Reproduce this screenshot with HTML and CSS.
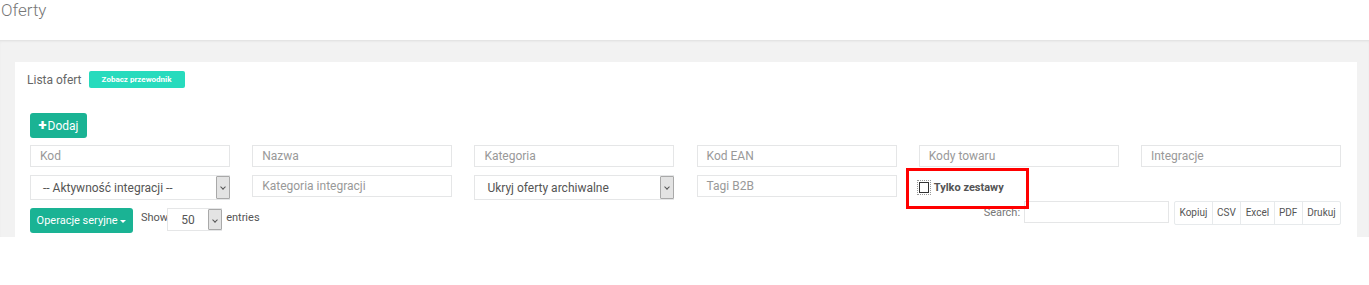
FILE: index.html
```html
<!DOCTYPE html>
<html lang="pl">
<head>
  <meta charset="utf-8">
  <link rel="stylesheet" href="styles.css">
</head>
<body>
  <div class="page-heading">Oferty</div>

  <div class="wrapper">
    <div class="ibox">
      <div class="ibox-title">
        <span class="ibox-name">Lista ofert</span>
        <span class="badge-guide">Zobacz przewodnik</span>
      </div>

      <div class="ibox-content">
        <button class="btn btn-primary btn-add"><span class="plus">+</span>Dodaj</button>

        <!-- Filtry -->
        <div class="filters">
          <div class="field">Kod</div>
          <div class="field">Nazwa</div>
          <div class="field">Kategoria</div>
          <div class="field">Kod EAN</div>
          <div class="field">Kody towaru</div>
          <div class="field">Integracje</div>

          <div class="select"><span>-- Aktywność integracji --</span><span class="arrow"></span></div>
          <div class="field">Kategoria integracji</div>
          <div class="select"><span>Ukryj oferty archiwalne</span><span class="arrow"></span></div>
          <div class="field">Tagi B2B</div>
          <div class="check-cell">
            <label class="check"><span class="box"></span>Tylko zestawy</label>
            <div class="highlight"></div>
          </div>
          <div></div>
        </div>

        <div class="table-tools">
          <div class="tools-left">
            <button class="btn btn-primary btn-ops">Operacje seryjne <span class="caret"></span></button>
            <span class="show-label">Show</span>
            <div class="select select-small"><span>50</span><span class="arrow"></span></div>
            <span class="show-label">entries</span>
          </div>
          <div class="tools-right">
            <span class="search-label">Search:</span>
            <div class="search-input"></div>
            <div class="btn-group">
              <span>Kopiuj</span>
              <span>CSV</span>
              <span>Excel</span>
              <span>PDF</span>
              <span>Drukuj</span>
            </div>
          </div>
        </div>
      </div>
    </div>
  </div>
</body>
</html>
```

FILE: styles.css
```css
body {
  margin: 0;
  font-family: Roboto, "Liberation Sans", sans-serif;
  color: #555;
  background: #fff;
}
.page-heading {
  height: 40px;
  padding-left: 1px;
  font-size: 17px;
  font-weight: 300;
  color: #777;
  line-height: 20px;
  box-sizing: border-box;
}
.wrapper {
  height: 197px;
  overflow: hidden;
  background: #f2f2f2;
  border-top: 1px solid #e4e4e4;
  box-shadow: inset 0 1px 2px rgba(0, 0, 0, 0.04);
  padding: 21px 12px 0 15px;
  box-sizing: border-box;
}
.ibox {
  background: #fff;
  height: 300px;
}
.ibox-title {
  display: flex;
  align-items: center;
  height: 34px;
  padding-left: 12px;
  box-sizing: border-box;
  padding-top: 1px;
}
.ibox-name {
  font-size: 12px;
  color: #666;
}
.badge-guide {
  margin-left: 7px;
  background: #27dbbd;
  color: #fff;
  font-size: 8px;
  font-weight: 700;
  width: 96px;
  height: 17px;
  line-height: 17px;
  text-align: center;
  border-radius: 2px;
}
.ibox-content {
  padding: 17px 16px 0 15px;
}
.btn {
  border: none;
  border-radius: 3px;
  font-family: inherit;
  cursor: pointer;
}
.btn-primary {
  background: #1ab394;
  color: #fff;
}
.btn-add {
  width: 57px;
  height: 25px;
  font-size: 12px;
  padding: 0;
  display: flex;
  align-items: center;
  justify-content: center;
}
.plus {
  font-size: 15px;
  font-weight: 900;
  margin-right: 1px;
  line-height: 1;
}
.filters {
  display: grid;
  grid-template-columns: repeat(6, 200px);
  column-gap: 22.2px;
  row-gap: 8px;
  margin-top: 7px;
  align-items: start;
}
.field {
  height: 22px;
  border: 1px solid #e5e6e7;
  box-sizing: border-box;
  font-size: 12px;
  color: #999;
  line-height: 20px;
  padding-left: 9px;
}
.select {
  height: 25px;
  border: 1px solid #e5e6e7;
  box-sizing: border-box;
  font-size: 12px;
  color: #555;
  display: flex;
  align-items: center;
  justify-content: space-between;
  padding-left: 12px;
}
.arrow {
  width: 14px;
  height: 23px;
  background: #e3e3e3;
  border: 1px solid #a9a9a9;
  box-sizing: border-box;
  position: relative;
  margin-right: -1px;
  border-radius: 1px;
}
.arrow::after {
  content: "";
  position: absolute;
  left: 4px;
  top: 8px;
  width: 3px;
  height: 3px;
  border-right: 1px solid #555;
  border-bottom: 1px solid #555;
  transform: rotate(45deg);
}
.check-cell {
  position: relative;
  height: 25px;
}
.check {
  display: flex;
  align-items: center;
  font-size: 11px;
  font-weight: 700;
  color: #555;
  margin-top: 6px;
}
.box {
  width: 10px;
  height: 11px;
  border: 1px solid #333;
  box-sizing: border-box;
  margin-right: 5px;
  outline: 1px dotted #999;
  outline-offset: 1px;
}
.highlight {
  position: absolute;
  left: -13px;
  top: -7px;
  width: 123px;
  height: 41px;
  border: 3px solid #f00;
  box-sizing: border-box;
}
.table-tools {
  display: flex;
  justify-content: space-between;
  align-items: flex-start;
  margin-top: 1px;
}
.tools-left {
  display: flex;
  align-items: flex-start;
  padding-top: 7px;
}
.btn-ops {
  width: 103px;
  height: 25px;
  font-size: 11px;
  padding: 0;
}
.caret {
  display: inline-block;
  width: 0;
  height: 0;
  border-left: 3px solid transparent;
  border-right: 3px solid transparent;
  border-top: 3px solid #fff;
  vertical-align: middle;
}
.show-label {
  font-size: 11px;
  color: #555;
  margin: 3px 4px 0 8px;
}
.select-small {
  width: 55px;
  height: 23px;
  padding-left: 13px;
  margin-left: -5px;
  margin-right: -4px;
  font-size: 12px;
}
.select-small .arrow {
  height: 21px;
}
.tools-right {
  display: flex;
  align-items: flex-start;
}
.search-label {
  font-size: 11px;
  color: #777;
  margin: 5px 4px 0 0;
}
.search-input {
  width: 145px;
  height: 22px;
  border: 1px solid #e5e6e7;
  box-sizing: border-box;
  margin-right: 5px;
}
.btn-group {
  display: flex;
  height: 24px;
  border: 1px solid #e7eaec;
  border-radius: 2px;
  box-sizing: border-box;
}
.btn-group span {
  font-size: 10px;
  color: #555;
  line-height: 22px;
  padding: 0 4.4px;
  border-left: 1px solid #e7eaec;
}
.btn-group span:first-child {
  border-left: none;
}
```
